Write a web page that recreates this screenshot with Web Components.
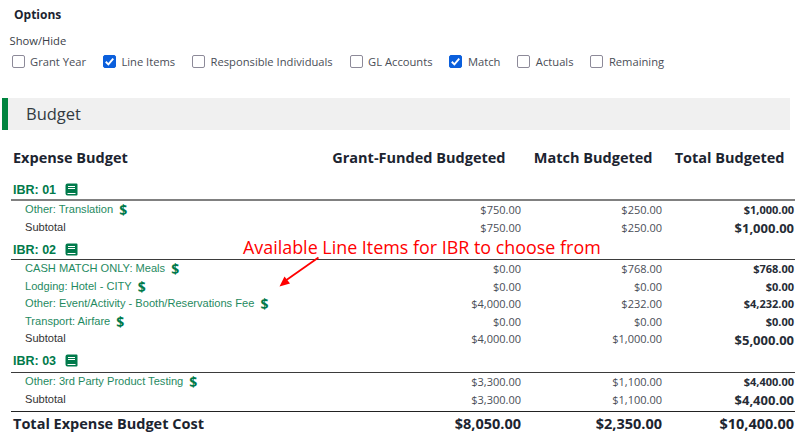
<!DOCTYPE html>
<html><head><meta charset="utf-8"><style>
html,body{margin:0;padding:0;background:#fff;width:805px;height:442px;overflow:hidden}
body{font-family:"Open Sans",sans-serif;color:#212a36;position:relative}
</style></head><body>
<budget-page>
<options-panel>
<opt-check label="Grant Year"></opt-check><opt-check label="Line Items" checked></opt-check><opt-check label="Responsible Individuals"></opt-check><opt-check label="GL Accounts"></opt-check><opt-check label="Match" checked></opt-check><opt-check label="Actuals"></opt-check><opt-check label="Remaining"></opt-check>
</options-panel>
<section-bar>Budget</section-bar>
<budget-table>
<budget-head></budget-head>
<ibr-head h="28" lift="1" name="IBR: 01" thick></ibr-head>
<line-row name="Other: Translation" a="$750.00" b="$250.00" c="$1,000.00"></line-row>
<line-row sub a="$750.00" b="$250.00" c="$1,000.00"></line-row>
<ibr-head h="23" lift="1" name="IBR: 02"></ibr-head>
<line-row name="CASH MATCH ONLY: Meals" a="$0.00" b="$768.00" c="$768.00"></line-row>
<line-row name="Lodging: Hotel - CITY" a="$0.00" b="$0.00" c="$0.00"></line-row>
<line-row name="Other: Event/Activity - Booth/Reservations Fee" a="$4,000.00" b="$232.00" c="$4,232.00"></line-row>
<line-row name="Transport: Airfare" a="$0.00" b="$0.00" c="$0.00"></line-row>
<line-row sub a="$4,000.00" b="$1,000.00" c="$5,000.00"></line-row>
<ibr-head h="24.5" lift="3" name="IBR: 03"></ibr-head>
<line-row name="Other: 3rd Party Product Testing" a="$3,300.00" b="$1,100.00" c="$4,400.00"></line-row>
<line-row sub a="$3,300.00" b="$1,100.00" c="$4,400.00"></line-row>
<total-row a="$8,050.00" b="$2,350.00" c="$10,400.00"></total-row>
</budget-table>
</budget-page>
<callout-note>Available Line Items for IBR to choose from</callout-note>
<script>
const def=(n,css,html)=>customElements.define(n,class extends HTMLElement{
  connectedCallback(){ if(this.shadowRoot)return; const r=this.attachShadow({mode:"open"}); r.innerHTML=`<style>${css}</style>`+(typeof html==="function"?html(this):html);}
});
def("budget-page",":host{display:block;padding-top:8px}","<slot></slot>");
def("options-panel",`:host{display:block;height:90px}
h2{margin:0 0 0 14px;font:700 12px/14px "Open Sans",sans-serif;color:#1c2430}
p{margin:11px 0 0 9.5px;font:11.2px/15px "Open Sans",sans-serif;color:#3a4048}
div{display:flex;gap:16.9px;margin:6px 0 0 11.5px}`,
`<h2>Options</h2><p>Show/Hide</p><div><slot></slot></div>`);
def("opt-check",`:host{display:flex;align-items:center;gap:5.5px;font:11.2px/15px "Open Sans",sans-serif;color:#4a4e57}
i{box-sizing:border-box;width:13px;height:13px;border:1.5px solid #8d8a99;border-radius:2px;background:#fff;display:flex}
i.on{background:#0b5fdc;border-color:#0b5fdc}svg{width:100%;height:100%}`,
h=>`<i class="${h.hasAttribute("checked")?"on":""}">${h.hasAttribute("checked")?'<svg viewBox="0 0 10 10"><path d="M1.6 5.2 4 7.6 8.4 2.4" fill="none" stroke="#fff" stroke-width="1.7"/></svg>':""}</i><span>${h.getAttribute("label")}</span>`);
def("section-bar",`:host{display:block;box-sizing:border-box;margin-left:2px;width:788px;height:32px;background:#f0f0f0;border-left:6px solid #00843f;padding-left:18px;font:16.5px/32px "Open Sans",sans-serif;color:#333a42}`,"<slot></slot>");
def("budget-table",`:host{display:block;margin:16px 0 0 11px;width:784px}`,"<slot></slot>");
def("budget-head",`:host{display:grid;grid-template-columns:1fr 200px 147px 132px;padding-right:10.5px;height:25px;font:700 14.5px/24px "Open Sans",sans-serif;color:#1c2430}
span{text-align:right;white-space:nowrap}span:first-of-type{text-align:left;padding-left:2px}`,
`<span>Expense Budget</span><span>Grant-Funded Budgeted</span><span>Match Budgeted</span><span>Total Budgeted</span>`);
const bookIcon=`<svg width="13" height="13" viewBox="0 0 13 13"><path fill="#007a4b" d="M2.500.5h9a1 1 0 0 1 1 1v10a1 1 0 0 1-1 1h-9a2 2 0 0 1-2-2v-8a2 2 0 0 1 2-2z"/><path fill="none" stroke="#fff" d="M3 3.500h7M3 5.500h7M2.500 10.500h8"/></svg>`;
def("ibr-head",`:host{display:flex;align-items:flex-end;box-sizing:border-box;border-bottom:1px solid #3b3b3b;padding:0 0 0 2px;font:700 12.5px/16px "Liberation Sans",sans-serif;color:#007a4b;gap:9px}
:host([thick]){border-bottom:2px solid #808080}svg{margin-bottom:2px}`,
h=>{h.style.height=(+h.getAttribute("h")+(h.hasAttribute("thick")?2:1))+"px";h.style.paddingBottom=h.getAttribute("lift")+"px";return `<span>${h.getAttribute("name")}</span>${bookIcon}`});
const rowCss=`:host{display:grid;grid-template-columns:1fr 132px 141px 132px;grid-template-rows:17.5px;padding-right:1px;height:17.5px;align-items:center;font:11px/17.5px "Open Sans",sans-serif;color:#4a4e57}
.n{padding-left:14px;font:11.100px/17.5px "Liberation Sans",sans-serif;color:#1f8a5f;display:flex;gap:6px;white-space:nowrap}
.n b{font:700 14px/17.5px "Open Sans",sans-serif;color:#007a4b}
.s{padding-left:14px;font:11.100px/17.5px "Liberation Sans",sans-serif;color:#333}
.v{text-align:right}.t{text-align:right;font-weight:700;color:#262c36}
:host([sub]) .t{font-size:13px;padding-top:3px}`;
def("line-row",rowCss,h=>`${h.hasAttribute("sub")?'<span class="s">Subtotal</span>':`<span class="n">${h.getAttribute("name")} <b>$</b></span>`}<span class="v">${h.getAttribute("a")}</span><span class="v">${h.getAttribute("b")}</span><span class="t">${h.getAttribute("c")}</span>`);
def("total-row",`:host{display:grid;grid-template-columns:1fr 132px 141px 132px;box-sizing:border-box;margin-top:3px;height:24px;border-top:1px solid #222;padding-right:1px;align-items:center;font:700 14.5px/23px "Open Sans",sans-serif;color:#1c2430}
span{text-align:right}span:first-of-type{text-align:left;padding-left:2px}`,
h=>`<span>Total Expense Budget Cost</span><span>${h.getAttribute("a")}</span><span>${h.getAttribute("b")}</span><span>${h.getAttribute("c")}</span>`);
def("callout-note",`:host{display:block;position:absolute;left:243px;top:236px;width:370px;height:60px;font:17.900px/22px "Open Sans",sans-serif;color:#f00;white-space:nowrap}
svg{position:absolute;left:30px;top:16px}`,
`<slot></slot><svg width="50" height="40" viewBox="0 0 50 40"><path d="M45.500 5.500 12 29" stroke="#f00" stroke-width="1.800" fill="none"/><path d="M6.500 34.500 11.500 24.500 17 31.500z" fill="#f00"/></svg>`);
</script>
</body></html>
